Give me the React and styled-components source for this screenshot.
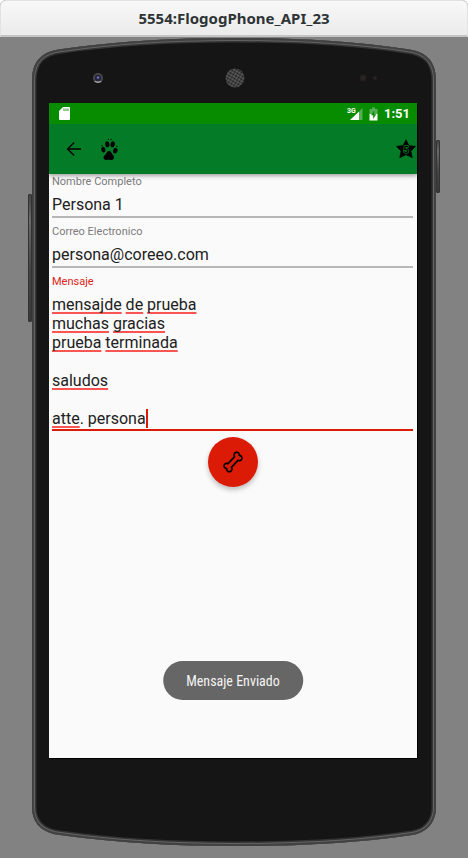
import React, { useState } from "react";
import styled, { createGlobalStyle } from "styled-components";

const GlobalStyle = createGlobalStyle`
  *, *::before, *::after { box-sizing: border-box; }
  body { margin: 0; background: #828282; font-family: Roboto, sans-serif; }
`;

const Window = styled.div`
  min-height: 100vh;
  display: flex;
  flex-direction: column;
  background: #828282;
`;

const TitleBar = styled.header`
  height: 37px;
  display: flex;
  align-items: center;
  justify-content: center;
  border: 1px solid #e2e2e2;
  border-bottom: 2px solid #c4c4c4;
  border-radius: 6px 6px 0 0;
  background: linear-gradient(#f8f8f8, #ebebeb);
  box-shadow: 0 -6px 0 6px #fff;
  clip-path: inset(0);
`;

const Title = styled.h1`
  margin: 0;
  font: 700 15px/20px "Noto Sans", sans-serif;
  color: #2e3436;
`;

const Device = styled.div`
  flex: 1;
  position: relative;
  display: flex;
  flex-direction: column;
  margin: 0 32px 11px;
  padding: 0 19px 89px 17px;
`;

const CaseDrawing = styled.svg`
  position: absolute;
  inset: 0;
  width: 100%;
  height: 100%;
`;

const SideKey = styled.span`
  position: absolute;
  top: ${(p) => p.$top}px;
  ${(p) => p.$side}: -4px;
  width: 4px;
  height: ${(p) => p.$length}px;
  border: 1px solid #333;
  border-radius: 1px;
  background: linear-gradient(#444, #6a6a6a 20%, #444 60%, #383838);
`;

const Earpiece = styled.div`
  position: relative;
  height: 66px;
  display: grid;
  grid-template-columns: 1fr auto 1fr;
  align-items: center;
  padding: 16px 40px 0 43px;

  & > :last-child { justify-self: end; }
`;

const Screen = styled.main`
  position: relative;
  flex: 1;
  display: flex;
  flex-direction: column;
  background: #fafafa;
  box-shadow: 1px 1px 0 #000;
`;

const StatusBar = styled.div`
  height: 21px;
  display: flex;
  align-items: center;
  gap: 6px;
  padding: 0 7px 0 10px;
  background: #078c00;
  color: #fff;
`;

const Spacer = styled.span`
  flex: 1;
`;

const Clock = styled.time`
  font: 700 13px/21px Roboto, sans-serif;
`;

const Toolbar = styled.nav`
  position: relative;
  height: 50px;
  display: flex;
  align-items: center;
  gap: 16px;
  padding: 0 1px 0 15px;
  background: #047b26;
  box-shadow: 0 2px 4px rgba(0, 0, 0, 0.35);
  clip-path: inset(0 0 -8px 0);
`;

const IconButton = styled.button`
  display: grid;
  place-items: center;
  padding: 0;
  border: 0;
  background: none;
  color: #000;
  cursor: pointer;
`;

const Form = styled.form`
  display: flex;
  flex-direction: column;
  padding: 0 4px 0 3px;
`;

const Field = styled.div`
  display: flex;
  flex-direction: column;
  padding-bottom: 6px;
`;

const Label = styled.label`
  font-size: 11px;
  line-height: 15px;
  color: ${(p) => (p.$active ? "#dc2419" : "#7c7c7c")};
`;

const Input = styled.input`
  width: 100%;
  height: 29px;
  padding: 4px 0 0;
  border: 0;
  border-bottom: 2px solid #b7b7b7;
  border-radius: 0;
  outline: 0;
  background: none;
  font: 400 16px/19px Roboto, sans-serif;
  color: #212121;
`;

const Editor = styled.div`
  display: grid;
  padding: 6px 0 1px;
  border-bottom: 2px solid #dc1b07;
  font: 400 16px/19px Roboto, sans-serif;

  & > * { grid-area: 1 / 1; }
`;

const TextArea = styled.textarea`
  width: 100%;
  padding: 0;
  border: 0;
  outline: 0;
  resize: none;
  overflow: hidden;
  background: none;
  font: inherit;
  color: #212121;
  caret-color: transparent;
`;

const SpellLayer = styled.div`
  white-space: pre-wrap;
  color: transparent;
  pointer-events: none;
  user-select: none;
`;

const Misspelled = styled.span`
  text-decoration: underline 2px #fa5552;
  text-decoration-skip-ink: none;
  text-underline-offset: 2px;
`;

const Caret = styled.span`
  display: inline-block;
  width: 2px;
  height: 19px;
  vertical-align: bottom;
  background: #dc1b07;
`;

const SendButton = styled(IconButton)`
  align-self: center;
  width: 50px;
  height: 50px;
  border-radius: 50%;
  background: #dc1b07;
  box-shadow: 0 3px 5px rgba(0, 0, 0, 0.24);
`;

const Toast = styled.div`
  position: absolute;
  left: 50%;
  bottom: 58px;
  transform: translateX(-50%);
  padding: 11px 23px 9px;
  border-radius: 20px;
  background: #666;
  font: 400 14px/19px "Roboto Condensed", Roboto, sans-serif;
  white-space: nowrap;
  color: #f4f4f4;
`;

const CASE_PATH =
  "M0 44 C0 24 10 14 30 12 C85 4 145 1 202 1 C260 1 320 4 374 12 C394 14 404 24 404 44 V770 C404 786 394 796 380 798 C320 807 260 809 202 809 C145 809 85 806 28 798 C10 796 0 786 0 770 Z";

function PhoneCase() {
  return (
    <CaseDrawing viewBox="0 0 404 810" preserveAspectRatio="none" aria-hidden="true">
      <defs>
        <clipPath id="case"><path d={CASE_PATH} /></clipPath>
      </defs>
      <g clipPath="url(#case)">
        <path d={CASE_PATH} fill="#151515" stroke="#343434" strokeWidth="9" />
        <path d={CASE_PATH} fill="none" stroke="#646464" strokeWidth="6" />
        <path d={CASE_PATH} fill="none" stroke="#414141" strokeWidth="4" />
      </g>
    </CaseDrawing>
  );
}

function Camera() {
  return (
    <svg width="12" height="12" viewBox="0 0 12 12" aria-hidden="true">
      <circle cx="6" cy="6" r="5" fill="#4c4c4c" />
      <path d="M2 9 A5 5 0 0 0 10 9" fill="#a5a5a5" />
      <circle cx="6" cy="6" r="3.4" fill="#26263f" />
      <circle cx="6" cy="5.6" r="1.2" fill="#7474c8" />
    </svg>
  );
}

function Speaker() {
  return (
    <svg width="20" height="20" viewBox="0 0 20 20" aria-hidden="true">
      <defs>
        <pattern id="mesh" width="3" height="3" patternUnits="userSpaceOnUse" patternTransform="rotate(30)">
          <rect width="3" height="3" fill="#5c5c5c" />
          <circle cx="1.5" cy="1.5" r="1.1" fill="#141414" />
        </pattern>
      </defs>
      <circle cx="10" cy="10" r="9.5" fill="url(#mesh)" />
    </svg>
  );
}

function Sensors() {
  return (
    <svg width="18" height="10" viewBox="0 0 18 10" aria-hidden="true">
      <circle cx="4" cy="5" r="3.5" fill="#251f20" />
      <circle cx="4" cy="5" r="1.5" fill="#302829" />
      <circle cx="16" cy="5" r="2" fill="#2a2223" />
    </svg>
  );
}

function SdCard() {
  return (
    <svg width="11" height="13" viewBox="0 0 11 13" aria-hidden="true">
      <path d="M4 0 H10 Q11 0 11 1 V12 Q11 13 10 13 H1 Q0 13 0 12 V4 Z" fill="#fff" />
      <path d="M5 1.5 V4 M7 1.5 V4 M9 1.5 V4" stroke="#4ba548" strokeWidth="1.2" />
    </svg>
  );
}

function Signal() {
  return (
    <svg width="16" height="14" viewBox="0 0 16 14" role="img" aria-label="3G">
      <path d="M15.5 1 V13 H12 V4.5 Z" fill="#57ad53" />
      <path d="M3 13 L12 4.5 V13 Z" fill="#fff" />
      <text x="0" y="6" fill="#fff" fontFamily="Roboto, sans-serif" fontSize="7" fontWeight="700">3G</text>
    </svg>
  );
}

function Battery() {
  return (
    <svg width="9" height="14" viewBox="0 0 9 14" aria-hidden="true">
      <path d="M3 0.5 H6 V2 H8.5 V7 H0.5 V2 H3 Z" fill="#57ad53" />
      <path d="M0.5 7 H8.5 V13.5 H0.5 Z" fill="#fff" />
      <path d="M5.4 3.5 L2 8.3 H4.2 V12 L7.2 7.2 H5.2 Z" fill="#078c00" />
    </svg>
  );
}

function BackArrow() {
  return (
    <svg width="20" height="20" viewBox="0 0 20 20" fill="none" stroke="currentColor" strokeWidth="1.4" aria-hidden="true">
      <path d="M17 10 H4 M10.2 3.4 L3.6 10 L10.2 16.6" />
    </svg>
  );
}

function Paw() {
  return (
    <svg width="19" height="23" viewBox="180 128 57 69" fill="currentColor" role="img" aria-label="Petagram">
      <ellipse cx="202" cy="147" rx="6.5" ry="9" transform="rotate(-6 202 147)" />
      <ellipse cx="218" cy="147" rx="6.5" ry="9" transform="rotate(10 218 147)" />
      <ellipse cx="190" cy="163" rx="6" ry="8.5" transform="rotate(-16 190 163)" />
      <ellipse cx="226" cy="166" rx="6.5" ry="8.5" transform="rotate(18 226 166)" />
      <path d="M207 167 C214 167 215 175 219 179 C224 184 223 195 213 194 C209 193 204 193 200 194 C190 195 188 185 194 180 C200 176 200 167 207 167 Z" />
      <circle cx="205" cy="132" r="2" />
      <circle cx="213" cy="132" r="2" />
      <circle cx="186" cy="151" r="2" />
      <circle cx="231" cy="153" r="2" />
    </svg>
  );
}

function Star() {
  return (
    <svg width="20" height="20" viewBox="0 0 20 20" aria-hidden="true">
      <path d="M10 0.8 L12.9 6.6 L19.5 7.4 L14.8 12 L16.2 18.6 L10 15.6 L3.8 18.6 L5.2 12 L0.5 7.4 L7.1 6.6 Z" fill="#000" stroke="#000" strokeWidth="0.8" strokeLinejoin="round" />
      <text x="10" y="13.5" textAnchor="middle" fill="#000" stroke="#047b26" strokeWidth="1.4" paintOrder="stroke" fontFamily="Roboto, sans-serif" fontSize="9" fontWeight="700">5</text>
    </svg>
  );
}

function Bone() {
  return (
    <svg width="24" height="24" viewBox="122 91 72 72" fill="none" stroke="#000" strokeWidth="5" strokeLinejoin="round" aria-hidden="true">
      <path d="M163 111 A8 8 0 1 1 177 107 A8 8 0 1 1 173 122 L153 143 A8 8 0 1 1 139 147 A8 8 0 1 1 143 132 Z" />
    </svg>
  );
}

/* Marks every word as unknown except the one still being typed. */
function SpellCheck({ text }) {
  const parts = text.split(/([A-Za-zÀ-ÿ]+)/);
  return (
    <SpellLayer aria-hidden="true">
      {parts.map((part, i) => {
        const typing = i === parts.length - 2 && parts[parts.length - 1] === "";
        return i % 2 && !typing ? <Misspelled key={i}>{part}</Misspelled> : part;
      })}
      <Caret />
    </SpellLayer>
  );
}

export default function App() {
  const [name, setName] = useState("Persona 1");
  const [email, setEmail] = useState("persona@coreeo.com");
  const [message, setMessage] = useState(
    "mensajde de prueba\nmuchas gracias\nprueba terminada\n\nsaludos\n\natte. persona"
  );

  return (
    <Window>
      <GlobalStyle />
      <TitleBar>
        <Title>5554:FlogogPhone_API_23</Title>
      </TitleBar>
      <Device>
        <SideKey $side="left" $top={157} $length={128} />
        <SideKey $side="right" $top={103} $length={53} />
        <PhoneCase />
        <Earpiece>
          <Camera />
          <Speaker />
          <Sensors />
        </Earpiece>
        <Screen>
          <StatusBar>
            <SdCard />
            <Spacer />
            <Signal />
            <Battery />
            <Clock>1:51</Clock>
          </StatusBar>
          <Toolbar>
            <IconButton type="button" aria-label="Volver"><BackArrow /></IconButton>
            <Paw />
            <Spacer />
            <IconButton type="button" aria-label="Favoritos"><Star /></IconButton>
          </Toolbar>
          <Form onSubmit={(e) => e.preventDefault()}>
            <Field>
              <Label htmlFor="name">Nombre Completo</Label>
              <Input id="name" value={name} onChange={(e) => setName(e.target.value)} />
            </Field>
            <Field>
              <Label htmlFor="email">Correo Electronico</Label>
              <Input id="email" type="email" value={email} onChange={(e) => setEmail(e.target.value)} />
            </Field>
            <Field>
              <Label htmlFor="message" $active>Mensaje</Label>
              <Editor>
                <SpellCheck text={message} />
                <TextArea
                  id="message"
                  rows={message.split("\n").length}
                  spellCheck={false}
                  value={message}
                  onChange={(e) => setMessage(e.target.value)}
                />
              </Editor>
            </Field>
            <SendButton type="submit" aria-label="Enviar"><Bone /></SendButton>
          </Form>
          <Toast role="status">Mensaje Enviado</Toast>
        </Screen>
      </Device>
    </Window>
  );
}
